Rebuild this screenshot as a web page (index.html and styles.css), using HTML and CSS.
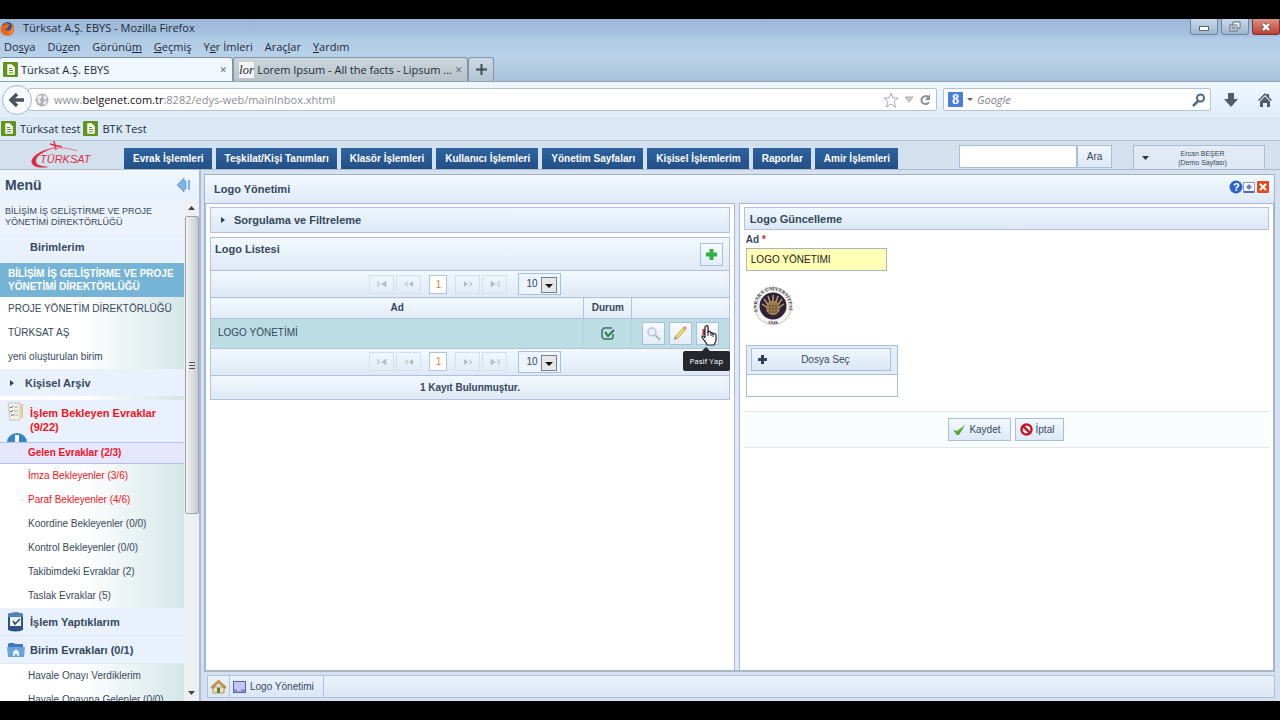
FILE: index.html
```html
<!DOCTYPE html>
<html lang="tr">
<head>
  <meta charset="UTF-8">
  <meta name="viewport" content="width=device-width, initial-scale=1.0">
  <title>Türksat A.Ş. EBYS</title>
  <link rel="stylesheet" href="styles.css">
</head>
<body>
  <svg class="defs" width="0" height="0">
    <symbol id="doc" viewBox="0 0 14 14">
      <rect width="14" height="14" rx="1" fill="#63931f"/>
      <path d="M4 2h4l3 3v7H4z" fill="#fff"/>
      <path d="M5.500 6h3M5.500 8h4M5.500 10h4" stroke="#63931f"/>
    </symbol>
    <symbol id="first" viewBox="0 0 10 8"><path d="M1 1v6" stroke="#b2bac3"/><path d="M5 4l4-3v6zM2 4h3" fill="#b2bac3" stroke="#b2bac3" stroke-width=".5"/></symbol>
    <symbol id="prev" viewBox="0 0 10 8"><path d="M4 2L1 4l3 2" fill="none" stroke="#b2bac3"/><path d="M5 4l4-3v6z" fill="#b2bac3"/></symbol>
    <symbol id="next" viewBox="0 0 10 8"><path d="M6 2l3 2-3 2" fill="none" stroke="#b2bac3"/><path d="M5 4L1 1v6z" fill="#b2bac3"/></symbol>
    <symbol id="last" viewBox="0 0 10 8"><path d="M9 1v6" stroke="#b2bac3"/><path d="M5 4L1 1v6zM5 4h3" fill="#b2bac3" stroke="#b2bac3" stroke-width=".5"/></symbol>
  </svg>

  <div class="window">
    <header class="titlebar">
      <svg class="icon" width="15" height="15" viewBox="0 0 15 15">
        <circle cx="7.500" cy="7.500" r="6.500" fill="#24569c"/>
        <path d="M5 2c3 0 4 1 5 2-1 0-2 1-2 2 0 2-2 2-3 2 1 2 4 2 6 0 1-2 1-4 0-6 4 3 4 8 1 11-3 3-9 2-11-2-1-3 0-6 2-8 0 1 1 1 2 1z" fill="#e8661b"/>
        <path d="M13 5c1 5-2 8-6 8 4-1 5-4 6-8z" fill="#f8bd38"/>
      </svg>
      <span class="title">Türksat A.Ş. EBYS - Mozilla Firefox</span>
      <div class="window-buttons">
        <button type="button" aria-label="Simge durumuna küçült"><svg width="12" height="10" viewBox="0 0 12 10"><rect x="1.500" y="4.500" width="9" height="4" fill="#fff" stroke="#56677a"/></svg></button>
        <button type="button" aria-label="Önceki boyut"><svg width="14" height="12" viewBox="0 0 14 12"><path d="M5 4V1h7v6h-3" fill="#fff" stroke="#56677a"/><rect x="2" y="4" width="7" height="6" fill="#fff" stroke="#56677a"/><rect x="4" y="6" width="3" height="2" fill="none" stroke="#56677a"/></svg></button>
        <button type="button" class="close" aria-label="Kapat"><svg width="12" height="10" viewBox="0 0 12 10"><path d="M3 2l6 6M9 2L3 8" stroke="#6a3c3c" stroke-width="4"/><path d="M3 2l6 6M9 2L3 8" stroke="#fff" stroke-width="2.500"/></svg></button>
      </div>
    </header>

    <nav class="menubar">
      <a href="#">Do<u>s</u>ya</a>
      <a href="#">Dü<u>z</u>en</a>
      <a href="#">Görünü<u>m</u></a>
      <a href="#"><u>G</u>eçmiş</a>
      <a href="#">Y<u>e</u>r İmleri</a>
      <a href="#">Araç<u>l</u>ar</a>
      <a href="#"><u>Y</u>ardım</a>
    </nav>

    <div class="tabs">
      <div class="tab active">
        <svg class="icon" width="15" height="15"><use href="#doc"/></svg>
        <span>Türksat A.Ş. EBYS</span>
        <button type="button" aria-label="Sekmeyi kapat">✕</button>
      </div>
      <div class="tab">
        <span class="lor">lor</span>
        <span>Lorem Ipsum - All the facts - Lipsum ...</span>
        <button type="button" aria-label="Sekmeyi kapat">✕</button>
      </div>
      <button type="button" class="tab-new" aria-label="Yeni sekme"><svg width="11" height="11" viewBox="0 0 11 11"><path d="M5.500 0v11M0 5.500h11" stroke="#3d4c5a" stroke-width="2"/></svg></button>
    </div>

    <div class="navbar">
      <button type="button" class="back" aria-label="Geri"><svg width="16" height="14" viewBox="0 0 16 14"><path d="M8 1L2 7l6 6M2 7h13" fill="none" stroke="#4a545e" stroke-width="3.500"/></svg></button>
      <div class="urlbar">
        <svg width="14" height="14" viewBox="0 0 14 14"><circle cx="7" cy="7" r="6.500" fill="#b0b4b8"/><path d="M2 4l3-2 2 1-1 2-2 1 2 2-1 3-2-2zM9 2l3 2-1 3-2-1-1-2zM9 8l3 0-2 4-2-1z" fill="#eceef0"/></svg>
        <span class="url">www.<b>belgenet.com.tr</b>:8282/edys-web/mainInbox.xhtml</span>
        <svg width="16" height="16" viewBox="0 0 16 16"><path d="M8 1l2 5h5l-4 3.500 1.500 5.500L8 12l-4.500 3L5 9.500 1 6h5z" fill="#fff" stroke="#a6abb0"/></svg>
        <svg width="10" height="7" viewBox="0 0 10 7"><path d="M1 1h8L5 6z" fill="#ccd0d3" stroke="#a6abb0"/></svg>
        <svg width="12" height="12" viewBox="0 0 12 12"><path d="M9 3a4 4 0 1 0 1 5" fill="none" stroke="#8a9299" stroke-width="2"/><path d="M11 0v6H6z" fill="#8a9299"/></svg>
      </div>
      <div class="searchbar">
        <span class="google">8</span>
        <svg width="6" height="4" viewBox="0 0 6 4"><path d="M0 0h6L3 3z" fill="#6e6460"/></svg>
        <input type="text" placeholder="Google" aria-label="Google">
        <svg width="14" height="14" viewBox="0 0 14 14"><circle cx="8.500" cy="5" r="3.500" fill="none" stroke="#4d6a8a" stroke-width="2"/><path d="M6 8l-5 5" stroke="#4d6a8a" stroke-width="2.500"/></svg>
      </div>
      <svg class="tool" width="14" height="14" viewBox="0 0 14 14"><path d="M4 0h6v6h4l-7 8-7-8h4z" fill="#525c66"/></svg>
      <svg class="tool" width="14" height="14" viewBox="0 0 14 14"><path d="M7 0L0 7l1 1 6-6 6 6 1-1-3-3V1h-2v1z" fill="#525c66"/><path d="M7 3.500L2 8.500V14h3v-4h4v4h3V8.500z" fill="#525c66"/></svg>
    </div>

    <nav class="bookmarks">
      <a href="#"><svg width="15" height="15"><use href="#doc"/></svg>Türksat test</a>
      <a href="#"><svg width="15" height="15"><use href="#doc"/></svg>BTK Test</a>
    </nav>

    <div class="app-header">
      <svg class="brand" width="66" height="28" viewBox="0 0 66 28" role="img" aria-label="Türksat">
        <path d="M28 6C10 8-3 18 3 24c3 3 10 3 16 2C11 25 6 24 6 20 6 14 16 9 28 6z" fill="#dc2f45"/>
        <path d="M24 0l2 9M20 3l12 3" stroke="#dc2f45" stroke-width="1.500"/>
        <path d="M20 8c10-2 19-1 27 2" fill="none" stroke="#e9788a" stroke-width="1"/>
        <text x="10" y="22" class="brand-text">TÜRKSAT</text>
      </svg>
      <nav class="main-menu">
        <a href="#">Evrak İşlemleri</a>
        <a href="#">Teşkilat/Kişi Tanımları</a>
        <a href="#">Klasör İşlemleri</a>
        <a href="#">Kullanıcı İşlemleri</a>
        <a href="#">Yönetim Sayfaları</a>
        <a href="#">Kişisel İşlemlerim</a>
        <a href="#">Raporlar</a>
        <a href="#">Amir İşlemleri</a>
      </nav>
      <form class="quick-search">
        <input type="text" aria-label="Ara">
        <button type="button">Ara</button>
      </form>
      <button type="button" class="user">
        <svg width="7" height="4" viewBox="0 0 7 4"><path d="M0 0h7L3.500 4z" fill="#333"/></svg>
        <span>Ercan BEŞER<br>(Demo Sayfası)</span>
      </button>
    </div>

    <div class="app-body">
      <aside class="sidebar">
        <div class="sidebar-head">
          <h2>Menü</h2>
          <svg width="14" height="14" viewBox="0 0 14 14"><path d="M0 7l7-7v3h2v8H7v3z" fill="#7fb2ea" stroke="#5b94d8" stroke-width=".7"/><path d="M12 2v10" stroke="#7fb2ea" stroke-width="2"/></svg>
        </div>
        <div class="sidebar-body">
          <div class="side-list">
            <p class="dept">BİLİŞİM İŞ GELİŞTİRME VE PROJE YÖNETİMİ DİREKTÖRLÜĞÜ</p>
            <h3 class="units">Birimlerim</h3>
            <a href="#" class="unit selected">BİLİŞİM İŞ GELİŞTİRME VE PROJE YÖNETİMİ DİREKTÖRLÜĞÜ</a>
            <a href="#" class="unit">PROJE YÖNETİM DİREKTÖRLÜĞÜ</a>
            <a href="#" class="unit">TÜRKSAT AŞ</a>
            <a href="#" class="unit">yeni oluşturulan birim</a>
            <h3 class="archive"><svg width="5" height="8" viewBox="0 0 5 8"><path d="M0 1l4 3-4 3z" fill="#333d48"/></svg>Kişisel Arşiv</h3>
            <h3 class="pending">
              <span class="pending-icons">
                <svg width="18" height="19" viewBox="0 0 18 19"><path d="M1 1h12v17H3z" fill="#f1f1e6" stroke="#c4c6bc"/><path d="M14 2h2v14h-2z" fill="#e8c983"/><path d="M3 5l1 1 2-2M3 9l1 1 2-2M4 13h3" fill="none" stroke="#667"/><path d="M7 5h4M7 9h4M8 13h3" stroke="#aab"/></svg>
                <svg width="20" height="9" viewBox="0 0 20 9"><path d="M0 9a10 9 0 0 1 20 0z" fill="#3687c5"/><path d="M8 2h4v7H8z" fill="#fff"/></svg>
              </span>
              <span>İşlem Bekleyen Evraklar (9/22)</span>
            </h3>
            <a href="#" class="item red current">Gelen Evraklar (2/3)</a>
            <a href="#" class="item red">İmza Bekleyenler (3/6)</a>
            <a href="#" class="item red">Paraf Bekleyenler (4/6)</a>
            <a href="#" class="item">Koordine Bekleyenler (0/0)</a>
            <a href="#" class="item">Kontrol Bekleyenler (0/0)</a>
            <a href="#" class="item">Takibimdeki Evraklar (2)</a>
            <a href="#" class="item">Taslak Evraklar (5)</a>
            <h3 class="group">
              <svg width="18" height="20" viewBox="0 0 18 20"><path d="M1 2c5-2 11-2 15 0v16c-5 2-10 2-15 0z" fill="#2d5285"/><path d="M1 2c5-2 11-2 15 0v3H1z" fill="#4f83bd"/><rect x="3" y="5" width="11" height="9" fill="#edf3f7"/><path d="M6 9l2 3 5-5" fill="none" stroke="#29465f" stroke-width="1.500"/></svg>
              İşlem Yaptıklarım
            </h3>
            <h3 class="group">
              <svg width="18" height="16" viewBox="0 0 18 16"><path d="M1 2l1-1h5l1 1h8v4H1z" fill="#3f78bf"/><path d="M0 5h18l-1 10H1z" fill="#6ba3df"/><path d="M9 7l-4 4h1v3h2v-2h2v2h2v-3h1z" fill="#e4f0fb"/></svg>
              Birim Evrakları (0/1)
            </h3>
            <a href="#" class="item">Havale Onayı Verdiklerim</a>
            <a href="#" class="item">Havale Onayına Gelenler (0/0)</a>
          </div>
          <div class="scrollbar">
            <svg width="7" height="4" viewBox="0 0 7 4"><path d="M0 4h7L3.500 0z" fill="#444"/></svg>
            <div class="thumb"><svg width="6" height="8" viewBox="0 0 6 8"><path d="M0 1.500h6M0 4.500h6M0 7.500h6" stroke="#555"/></svg></div>
            <svg width="7" height="4" viewBox="0 0 7 4"><path d="M0 0h7L3.500 4z" fill="#444"/></svg>
          </div>
        </div>
      </aside>

      <main class="workspace">
        <section class="dialog">
          <header class="dialog-head">
            <h2>Logo Yönetimi</h2>
            <svg width="14" height="14" viewBox="0 0 14 14"><circle cx="7" cy="7" r="6.500" fill="#2e62c8"/><text x="4" y="11" class="help-mark">?</text></svg>
            <svg width="12" height="12" viewBox="0 0 12 12"><rect x=".5" y="1.500" width="11" height="10" fill="#f5f8fd" stroke="#8b9cd0"/><path d="M6 3l3 3-3 3-3-3z" fill="#6f7fc8"/><path d="M1 11h10" stroke="#5568b4" stroke-width="2"/></svg>
            <button type="button" class="dialog-close" aria-label="Kapat"><svg width="12" height="12" viewBox="0 0 12 12"><rect width="12" height="12" rx="1" fill="#dc4f1d"/><path d="M3 3l6 6M9 3L3 9" stroke="#fff" stroke-width="2"/></svg></button>
          </header>

          <div class="panes">
            <div class="pane">
              <h3 class="bar filter"><svg width="5" height="8" viewBox="0 0 5 8"><path d="M0 1l4 3-4 3z" fill="#333d48"/></svg>Sorgulama ve Filtreleme</h3>

              <div class="list">
                <div class="list-head">
                  <h3>Logo Listesi</h3>
                  <button type="button" class="icon-button" aria-label="Ekle"><svg width="13" height="13" viewBox="0 0 13 13"><path d="M4.500 1h4v3.500H12v4H8.500V12h-4V8.500H1v-4h3.500z" fill="#31b144"/></svg></button>
                </div>
                <div class="paginator">
                  <button type="button" aria-label="İlk"><svg width="10" height="8"><use href="#first"/></svg></button>
                  <button type="button" aria-label="Önceki"><svg width="10" height="8"><use href="#prev"/></svg></button>
                  <span class="page">1</span>
                  <button type="button" aria-label="Sonraki"><svg width="10" height="8"><use href="#next"/></svg></button>
                  <button type="button" aria-label="Son"><svg width="10" height="8"><use href="#last"/></svg></button>
                  <span class="rows"><select aria-label="Satır sayısı"><option>10</option></select><svg class="drop" width="16" height="16" viewBox="0 0 16 16"><rect x=".5" y=".5" width="15" height="15" fill="#e6e7e8" stroke="#77818a"/><path d="M4 7h8l-4 4z" fill="#111"/></svg></span>
                </div>
                <table>
                  <thead>
                    <tr><th>Ad</th><th class="col-state">Durum</th><th class="col-actions"></th></tr>
                  </thead>
                  <tbody>
                    <tr>
                      <td>LOGO YÖNETİMİ</td>
                      <td class="col-state"><svg width="14" height="13" viewBox="0 0 14 13"><path d="M11 1H3L1 3v7l2 2h8l1-2V7" fill="none" stroke="#3d7268" stroke-width="1.500"/><path d="M4 5l3 4 6-6" fill="none" stroke="#2d7a4a" stroke-width="2"/></svg></td>
                      <td class="col-actions">
                        <div class="actions">
                          <button type="button" class="icon-button" aria-label="İncele"><svg width="15" height="15" viewBox="0 0 15 15"><circle cx="6" cy="6" r="4" fill="#e8eff7" stroke="#bcc5d0" stroke-width="1.500"/><path d="M9 9l5 5" stroke="#b5b4bd" stroke-width="2"/></svg></button>
                          <button type="button" class="icon-button" aria-label="Düzenle"><svg width="15" height="15" viewBox="0 0 15 15"><path d="M3 12L12 2" stroke="#b9a545" stroke-width="3.500"/><path d="M3 12L12 2" stroke="#f3e272" stroke-width="2"/><path d="M11 3l2-2" stroke="#dd8d88" stroke-width="3"/><path d="M1 14l1-3 2 1z" fill="#6a6252"/></svg></button>
                          <div class="passive">
                            <button type="button" class="icon-button" aria-label="Pasif Yap"><svg width="15" height="15" viewBox="0 0 15 15"><path d="M7 1v7M4 3v6" stroke="#c9303c" stroke-width="3"/></svg></button>
                            <svg class="hand" width="16" height="21" viewBox="0 0 16 21"><path d="M5 1c2-1 2 0 2 1v5c1-1 2-1 3 1 1-1 2 0 2 1 2-1 3 0 3 1v5c0 2-1 3-2 5H6c0-2-3-4-5-8 0-2 2-1 3 1V2z" fill="#fff" stroke="#222" stroke-width="1.200"/><path d="M7 7v4M10 8v3M12 9v3" stroke="#222"/></svg>
                            <span class="tooltip">Pasif Yap</span>
                          </div>
                        </div>
                      </td>
                    </tr>
                  </tbody>
                </table>
                <div class="paginator">
                  <button type="button" aria-label="İlk"><svg width="10" height="8"><use href="#first"/></svg></button>
                  <button type="button" aria-label="Önceki"><svg width="10" height="8"><use href="#prev"/></svg></button>
                  <span class="page">1</span>
                  <button type="button" aria-label="Sonraki"><svg width="10" height="8"><use href="#next"/></svg></button>
                  <button type="button" aria-label="Son"><svg width="10" height="8"><use href="#last"/></svg></button>
                  <span class="rows"><select aria-label="Satır sayısı"><option>10</option></select><svg class="drop" width="16" height="16" viewBox="0 0 16 16"><rect x=".5" y=".5" width="15" height="15" fill="#e6e7e8" stroke="#77818a"/><path d="M4 7h8l-4 4z" fill="#111"/></svg></span>
                </div>
                <div class="list-foot">1 Kayıt Bulunmuştur.</div>
              </div>
            </div>

            <div class="pane">
              <h3 class="bar">Logo Güncelleme</h3>
              <form class="edit">
                <label for="ad">Ad <span>*</span></label>
                <input type="text" id="ad" value="LOGO YÖNETİMİ">
                <svg class="seal" width="40" height="40" viewBox="0 0 40 40">
                  <defs><path id="arc" d="M5 26A16 16 0 1 1 35 26"/></defs>
                  <circle cx="20" cy="20" r="18.500" fill="#f6f4f0" stroke="#c5c0b8"/>
                  <text class="seal-text"><textPath href="#arc">ANKARA ÜNİVERSİTESİ</textPath></text>
                  <circle cx="20" cy="20" r="13.500" fill="#2f2138"/>
                  <path d="M20 9v9M15 10l3 9M25 10l-3 9M11 13l5 7M29 13l-5 7M9 18l6 4M31 18l-6 4" stroke="#b79b72" stroke-width="1.500"/>
                  <circle cx="20" cy="22" r="7" fill="#b08c55"/>
                  <path d="M14 20h12M13 23h14M15 26h10M17 17v10M20 16v12M23 17v10" stroke="#57402f" stroke-width=".7"/>
                  <text x="15" y="38" class="seal-text">1946</text>
                </svg>
                <div class="upload">
                  <div class="upload-head">
                    <button type="button"><svg width="9" height="9" viewBox="0 0 9 9"><path d="M4.500 0v9M0 4.500h9" stroke="#30405a" stroke-width="3"/></svg><span>Dosya Seç</span></button>
                  </div>
                  <div class="upload-files"></div>
                </div>
              </form>
              <div class="form-actions">
                <button type="button"><svg width="13" height="12" viewBox="0 0 13 12"><path d="M0 6l4 1 8-6-6 10H4z" fill="#55a832"/></svg>Kaydet</button>
                <button type="button"><svg width="13" height="13" viewBox="0 0 13 13"><circle cx="6.500" cy="6.500" r="5" fill="#fff" stroke="#bf1d2b" stroke-width="2.500"/><path d="M3 3l7 7" stroke="#bf1d2b" stroke-width="2.500"/></svg>İptal</button>
              </div>
            </div>
          </div>
        </section>

        <footer class="taskbar">
          <a href="#" class="home" aria-label="Ana sayfa"><svg width="15" height="14" viewBox="0 0 15 14"><path d="M2 7h11v6H2z" fill="#ece2b4" stroke="#8a7c50" stroke-width=".7"/><path d="M7.500 0L0 7l1 1.500L7.500 3 14 8.500 15 7z" fill="#d99a3f" stroke="#8f6428" stroke-width=".6"/><path d="M6 8h3v5H6z" fill="#617c4c"/></svg></a>
          <a href="#" class="task"><svg width="13" height="12" viewBox="0 0 13 12"><rect x=".5" y=".5" width="12" height="11" fill="#c2c5f2" stroke="#5a62ae"/><path d="M1 9.500h11" stroke="#777fc9" stroke-width="2"/><path d="M4 9h4" stroke="#fff"/></svg>Logo Yönetimi</a>
        </footer>
      </main>
    </div>
  </div>
</body>
</html>
```

FILE: styles.css
```css
* {
  margin: 0;
  padding: 0;
  box-sizing: border-box;
}

body {
  height: 100vh;
  padding: 19px 0;
  background-color: #000;
  font-family: "Liberation Sans", Arial, sans-serif;
  font-size: 10px;
  line-height: 12px;
  color: #35485c;
}

svg {
  display: block;
  flex: none;
}

a {
  color: inherit;
  text-decoration: none;
}

button,
input,
select {
  font: inherit;
  color: inherit;
}

.defs {
  position: absolute;
}

.window {
  height: 100%;
  display: flex;
  flex-direction: column;
  overflow: hidden;
  background-color: #d8e6f5;
}

/* browser chrome */

.titlebar,
.menubar,
.tabs,
.navbar,
.bookmarks {
  flex: none;
  display: flex;
  align-items: center;
  font-family: "Open Sans", "Noto Sans", sans-serif;
  font-size: 11px;
  line-height: 16px;
  color: #1c2a38;
}

.titlebar {
  height: 18px;
  gap: 8px;
  background: linear-gradient(#9cb6d6, #a9c4e2);
}

.titlebar .title {
  flex: 1;
}

.window-buttons {
  display: flex;
  align-self: flex-start;
  gap: 3px;
}

.window-buttons button {
  width: 28px;
  height: 16px;
  display: flex;
  align-items: center;
  justify-content: center;
  border: 1px solid #6f87a3;
  border-top: 0;
  border-radius: 0 0 3px 3px;
  background: linear-gradient(#c9d9ea, #9fb6cf);
}

.window-buttons .close {
  border-color: #7b3439;
  background: linear-gradient(#dd9388, #bf3f2d);
}

.menubar {
  height: 20px;
  gap: 12px;
  padding-left: 4px;
  background: linear-gradient(#b0cbe6, #b8d1e9);
}

.tabs {
  height: 25px;
  align-items: flex-end;
  background: linear-gradient(#b8d1e9, #a9c3dc);
  border-bottom: 1px solid #8fa3b5;
}

.tab {
  width: 235px;
  height: 24px;
  display: flex;
  align-items: center;
  gap: 3px;
  padding: 0 5px;
  background: linear-gradient(#cbd6dd, #b7c2ca);
  border: 1px solid #8396a8;
  border-bottom: 0;
  border-radius: 3px 3px 0 0;
  white-space: nowrap;
}

.tab.active {
  width: 233px;
  padding-left: 3px;
  background: #f0f7fe;
  border-left: 0;
}

.tab button {
  margin-left: auto;
  border: 0;
  background: none;
  font-family: "DejaVu Sans", sans-serif;
  font-size: 9px;
  color: #667380;
}

.lor {
  background-color: #f4f4f4;
  font-family: "Liberation Serif", serif;
  font-size: 13px;
  font-style: italic;
}

.tab-new {
  width: 26px;
  height: 24px;
  display: flex;
  align-items: center;
  justify-content: center;
  background: linear-gradient(#cbd9e5, #b4c4d2);
  border: 1px solid #8396a8;
  border-bottom: 0;
  border-radius: 3px 3px 0 0;
}

.navbar {
  height: 35px;
  padding: 0 8px 0 2px;
  background: linear-gradient(#f0f7fe, #dfedf9);
}

.back {
  z-index: 1;
  width: 30px;
  height: 30px;
  display: flex;
  align-items: center;
  justify-content: center;
  border: 1px solid #a8b8c6;
  border-radius: 50%;
  background-color: #f7fbfe;
}

.urlbar,
.searchbar {
  height: 23px;
  display: flex;
  align-items: center;
  background-color: #fff;
  border: 1px solid #b4c2cf;
  border-radius: 2px;
}

.urlbar {
  flex: 1;
  gap: 5px;
  margin-left: -4px;
  padding: 0 5px 0 6px;
  color: #8a8f94;
}

.url {
  flex: 1;
}

.url b {
  font-weight: 500;
  color: #111;
}

.searchbar {
  width: 268px;
  gap: 4px;
  margin-left: 6px;
  padding: 0 4px;
}

.google {
  width: 15px;
  border-radius: 1px;
  background-color: #4a7de0;
  color: #fff;
  font-family: "Liberation Serif", serif;
  font-size: 14px;
  font-weight: bold;
  line-height: 15px;
  text-align: center;
}

.searchbar input {
  flex: 1;
  min-width: 0;
  border: 0;
  outline: 0;
  background: none;
  font-style: italic;
}

.searchbar input::placeholder {
  color: #7d8388;
}

.tool {
  margin-left: 13px;
}

.tool + .tool {
  margin-left: 20px;
}

.bookmarks {
  height: 24px;
  gap: 3px;
  padding-left: 1px;
  background-color: #dbe9f6;
  border-bottom: 1px solid #aebfce;
}

.bookmarks a {
  display: flex;
  align-items: center;
  gap: 4px;
}

/* application header */

.app-header {
  flex: none;
  height: 29px;
  display: flex;
  align-items: flex-end;
  padding-right: 15px;
  background-color: #d3e0ee;
  border-bottom: 1px solid #a9bac9;
}

.brand {
  margin: 0 28px 0 30px;
}

.brand-text {
  font-size: 11px;
  font-style: italic;
  fill: #dc2f45;
}

.main-menu {
  flex: 1;
  display: flex;
  gap: 4px;
}

.main-menu a {
  height: 21px;
  padding: 0 8px 0 9px;
  background: linear-gradient(#2e639f, #234f86);
  color: #fff;
  font-weight: bold;
  line-height: 22px;
  white-space: nowrap;
}

.quick-search {
  display: flex;
  margin-bottom: 1px;
}

.quick-search input,
.quick-search button {
  height: 23px;
  border: 1px solid #a9bed6;
}

.quick-search input {
  width: 118px;
  padding: 0 4px;
  background-color: #fff;
}

.quick-search button {
  width: 35px;
  background: linear-gradient(#f2f7fc, #dce8f5);
}

.user {
  width: 132px;
  height: 24px;
  display: flex;
  align-items: center;
  margin-left: 21px;
  padding: 0 8px;
  border: 1px solid #a9bed6;
  border-bottom: 0;
  background: linear-gradient(#e4ecf5, #dce6f2);
  font-size: 7px;
  line-height: 9px;
}

.user span {
  flex: 1;
}

.app-body {
  flex: 1;
  min-height: 0;
  display: flex;
}

/* sidebar */

.sidebar {
  width: 201px;
  flex: none;
  display: flex;
  flex-direction: column;
  background: linear-gradient(#f0f7fe, #e6effb 30px);
  border-right: 2px solid #a9bbd4;
}

.sidebar-head {
  flex: none;
  height: 30px;
  display: flex;
  align-items: center;
  justify-content: space-between;
  padding: 0 8px 0 5px;
}

.sidebar-head h2 {
  font-size: 14px;
  line-height: 18px;
}

.sidebar-body {
  flex: 1;
  min-height: 0;
  display: flex;
}

.side-list {
  flex: 1;
  min-width: 0;
  overflow: hidden;
  background: linear-gradient(to right, #fff 45%, #d5e6e8);
}

.side-list h3 {
  display: flex;
  align-items: center;
  background-color: #e9f2fc;
  font-size: 11px;
  line-height: 14px;
}

.dept {
  padding: 6px 5px;
  background-color: #edf3fc;
  font-size: 9px;
  line-height: 11px;
}

.side-list .units {
  height: 29px;
  padding: 0 0 4px 30px;
}

.unit {
  display: block;
  padding: 6px 8px;
  line-height: 12px;
}

.unit.selected {
  padding: 4px 8px;
  background-color: #75b4d6;
  color: #fff;
  font-weight: bold;
  line-height: 13px;
}

.side-list .archive {
  height: 27px;
  gap: 10px;
  padding-left: 10px;
}

.side-list .pending {
  height: 42px;
  align-items: flex-start;
  gap: 5px;
  margin-top: 4px;
  padding: 2px 4px 0 7px;
  color: #f0141e;
}

.pending span {
  padding-top: 4px;
}

.pending .pending-icons {
  width: 18px;
  display: flex;
  flex: none;
  flex-direction: column;
  gap: 12px;
  padding: 0;
}

.item {
  display: block;
  padding: 6px 0 6px 28px;
  white-space: nowrap;
}

.item.red {
  color: #f0141e;
}

.item.current {
  position: relative;
  padding: 4px 0 4px 28px;
  background-color: #e6e6ff;
  border-top: 1px solid #b3c0ea;
  border-bottom: 1px solid #b3c0ea;
  font-weight: bold;
}

.side-list .group {
  height: 28px;
  gap: 5px;
  padding-left: 7px;
  border-bottom: 1px solid #dce8f4;
}

.scrollbar {
  width: 15px;
  display: flex;
  flex-direction: column;
  align-items: center;
  gap: 6px;
  padding: 6px 0;
  background-color: #edf0f2;
}

.thumb {
  flex: 1;
  width: 14px;
  display: flex;
  align-items: center;
  justify-content: center;
  margin-bottom: 171px;
  border: 1px solid #9aa2aa;
  border-radius: 2px;
  background: linear-gradient(to right, #f4f4f4, #c6cacd);
}

/* workspace */

.workspace {
  flex: 1;
  min-width: 0;
  display: flex;
  flex-direction: column;
  padding: 4px 5px 3px 3px;
  background-color: #d5e1ee;
}

.dialog {
  flex: 1;
  min-height: 0;
  display: flex;
  flex-direction: column;
  border: 1px solid #9fb0cc;
  border-bottom: 2px solid #aab6c2;
}

.dialog-head {
  flex: none;
  height: 28px;
  display: flex;
  align-items: center;
  padding: 0 5px 4px 9px;
  background: linear-gradient(#f2f9ff, #dfe9f6);
}

.dialog-head h2 {
  flex: 1;
  padding-top: 4px;
  font-size: 11px;
  line-height: 14px;
}

.help-mark {
  font-size: 11px;
  font-weight: bold;
  fill: #fff;
}

.dialog-close {
  margin-left: 2px;
  border: 0;
  background: none;
}

.panes {
  flex: 1;
  min-height: 0;
  display: grid;
  grid-template-columns: 99fr 100fr;
  gap: 4px;
  background-color: #dfe9f6;
}

.pane {
  padding: 3px 4px;
  background-color: #fff;
  border: 1px solid #a5b8d8;
  border-bottom: 0;
}

.bar {
  height: 23px;
  display: flex;
  align-items: center;
  padding: 0 5px;
  background: linear-gradient(#eef7fe, #dce8f5);
  border: 1px solid #b2c2de;
  font-size: 11px;
}

.filter {
  height: 26px;
  gap: 8px;
  margin-bottom: 4px;
  padding-left: 10px;
}

.list {
  border: 1px solid #b2c2de;
}

.list-head,
.paginator,
.list-foot {
  background: linear-gradient(#f2f9fe, #dfe9f5);
}

.list-head {
  height: 32px;
  display: flex;
  align-items: center;
  justify-content: space-between;
  padding: 0 6px 0 4px;
}

.list-head h3 {
  padding-bottom: 10px;
  font-size: 11px;
}

.icon-button {
  width: 23px;
  height: 23px;
  display: flex;
  align-items: center;
  justify-content: center;
  border: 1px solid #a9bed8;
  background: linear-gradient(#f7fbfe, #e3edf8);
}

.paginator {
  height: 27px;
  display: flex;
  align-items: center;
  justify-content: center;
  gap: 2px;
  padding-right: 9px;
  border-top: 1px solid #b2c2de;
}

.paginator button {
  width: 25px;
  height: 19px;
  display: flex;
  align-items: center;
  justify-content: center;
  border: 1px solid #d3dfed;
  background: none;
}

.page {
  width: 18px;
  height: 19px;
  margin: 0 6px;
  border: 1px solid #b2c2de;
  background-color: #fff;
  color: #d98438;
  line-height: 17px;
  text-align: center;
}

.rows {
  position: relative;
  margin-left: 9px;
}

.rows select {
  display: block;
  width: 43px;
  height: 22px;
  padding-left: 7px;
  appearance: none;
  border: 1px solid #a9bed8;
  border-radius: 0;
  background-color: #edf4fb;
}

.drop {
  position: absolute;
  top: 4px;
  right: 4px;
  pointer-events: none;
}

table {
  width: 100%;
  border-collapse: collapse;
  table-layout: fixed;
}

th {
  height: 21px;
  border-top: 1px solid #b2c2de;
  border-bottom: 1px solid #b2c2de;
  background: linear-gradient(#f2f9fe, #e1ebf6);
}

th + th {
  border-left: 1px solid #b2c2de;
}

td {
  height: 29px;
  padding: 0 7px;
  background-color: #bddde4;
}

td + td {
  border-left: 1px solid #b3d2de;
}

.col-state {
  width: 48px;
}

td.col-state {
  padding: 0 17px;
}

.col-actions {
  width: 97px;
}

td.col-actions {
  padding: 0 10px;
}

.actions {
  display: flex;
  gap: 4px;
}

.passive {
  position: relative;
}

.hand {
  position: absolute;
  top: 3px;
  left: 5px;
}

.tooltip {
  position: absolute;
  z-index: 1;
  top: 29px;
  left: -13px;
  width: 47px;
  border-radius: 2px;
  background-color: #24282d;
  color: #fff;
  font-family: "Open Sans", sans-serif;
  font-size: 8px;
  line-height: 20px;
  text-align: center;
  white-space: nowrap;
}

.tooltip::before {
  content: "";
  position: absolute;
  top: -4px;
  left: 19px;
  border: 4px solid transparent;
  border-top: 0;
  border-bottom-color: #24282d;
}

.list-foot {
  height: 24px;
  border-top: 1px solid #b2c2de;
  font-weight: bold;
  line-height: 23px;
  text-align: center;
}

/* edit form */

.edit {
  display: flex;
  flex-direction: column;
  align-items: flex-start;
  padding: 4px 2px 14px;
}

.edit label {
  font-weight: bold;
}

.edit label span {
  color: #e0262e;
}

.edit input {
  width: 141px;
  height: 23px;
  margin-top: 2px;
  padding: 0 4px;
  border: 1px solid #a9b6c0;
  background-color: #ffffb5;
  color: #222;
}

.seal {
  margin: 15px 7px 19px;
}

.seal-text {
  font-family: "Liberation Serif", serif;
  font-size: 5px;
  font-weight: bold;
  fill: #45414a;
}

.upload {
  width: 152px;
  border: 1px solid #a9bed8;
}

.upload-head {
  padding: 2px 6px 3px 4px;
  background-color: #e3edf8;
  border-bottom: 1px solid #a9bed8;
}

.upload-head button {
  width: 100%;
  height: 23px;
  display: flex;
  align-items: center;
  padding: 0 6px;
  border: 1px solid #a9bed8;
  background: linear-gradient(#eff6fd, #dbe7f5);
}

.upload-head span {
  flex: 1;
}

.upload-files {
  height: 21px;
}

.form-actions {
  display: flex;
  justify-content: center;
  gap: 4px;
  padding: 6px;
  border-top: 1px solid #e2e9ee;
  border-bottom: 1px solid #e2e9ee;
  background-color: #fafdfe;
}

.form-actions button {
  height: 23px;
  display: flex;
  align-items: center;
  gap: 3px;
  padding: 0 9px 0 4px;
  border: 1px solid #a9bed8;
  background: linear-gradient(#f2f8fd, #dde9f6);
}

/* open windows */

.taskbar {
  flex: none;
  height: 23px;
  display: flex;
  margin: 3px 0 0 3px;
  border: 1px solid #b2c2de;
  background: linear-gradient(#eaf3fc, #dbe6f4);
}

.home,
.task {
  display: flex;
  align-items: center;
  gap: 4px;
  padding: 0 3px;
  border-right: 1px solid #b2c2de;
}

.task {
  padding-right: 9px;
}
```
